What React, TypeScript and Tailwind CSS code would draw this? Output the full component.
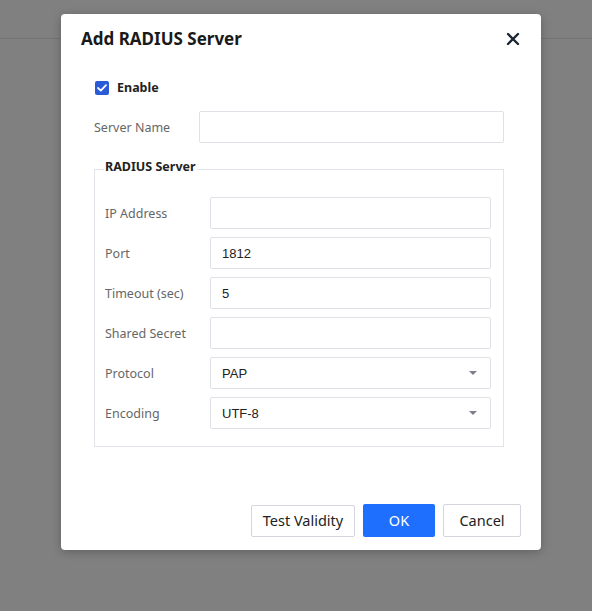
import React from 'react';

const FONT = "font-['Noto_Sans',_'Open_Sans',_sans-serif]";
const VALUE_FONT = "font-['Liberation_Sans',_Arial,_sans-serif]";

function CloseIcon() {
  return (
    <svg width="14" height="14" viewBox="0 0 14 14" fill="none" aria-hidden="true">
      <path d="M2 2 L12 12 M12 2 L2 12" stroke="#1c2733" strokeWidth="2.4" strokeLinecap="round" />
    </svg>
  );
}

function Caret() {
  return (
    <svg width="8" height="4" viewBox="0 0 8 4" aria-hidden="true">
      <path d="M0 0 L8 0 L4 4 Z" fill="#7a7f8a" />
    </svg>
  );
}

function Field({ value = '', select = false }: { value?: string; select?: boolean }) {
  return (
    <div
      className={`flex h-[32px] w-[281px] items-center justify-between rounded-[2px] border border-[#dfe1e6] bg-white pl-[11px] pr-[13px] text-[13px] text-[#222] ${VALUE_FONT}`}
    >
      <span className="pt-[2px]">{value}</span>
      {select && <Caret />}
    </div>
  );
}

const ROWS: Array<{ label: string; value?: string; select?: boolean }> = [
  { label: 'IP Address' },
  { label: 'Port', value: '1812' },
  { label: 'Timeout (sec)', value: '5' },
  { label: 'Shared Secret' },
  { label: 'Protocol', value: 'PAP', select: true },
  { label: 'Encoding', value: 'UTF-8', select: true },
];

export default function App() {
  return (
    <div className={`relative h-[611px] w-full overflow-hidden bg-[#808080] ${FONT}`}>
      {/* page behind the overlay */}
      <div className="h-[39px] border-b border-[#747474]" />

      {/* dialog */}
      <div className="absolute left-[61px] top-[14px] flex h-[536px] w-[480px] flex-col rounded-[4px] bg-white shadow-[0_2px_10px_rgba(0,0,0,0.25)]">
        <div className="flex h-[50px] items-center justify-between pl-[20px] pr-[21px]">
          <h2 className="text-[17px] font-bold text-[#1a1a1a]">Add RADIUS Server</h2>
          <CloseIcon />
        </div>

        <div className="flex flex-col pl-[33px] pr-[37px]">
          <label className="mt-[14px] flex h-[20px] items-center gap-[8px] pl-[1px]">
            <span className="flex h-[14px] w-[14px] items-center justify-center rounded-[2px] bg-[#2a5bd7]">
              <svg width="10" height="8" viewBox="0 0 10 8" aria-hidden="true">
                <path d="M1 4 L3.8 6.6 L9 1.2" stroke="#fff" strokeWidth="1.8" fill="none" strokeLinecap="round" strokeLinejoin="round" />
              </svg>
            </span>
            <span className="text-[12.5px] font-bold text-[#222]">Enable</span>
          </label>

          <div className="mt-[13px] flex h-[32px] items-center">
            <span className="w-[105px] pt-[2px] text-[12.5px] text-[#666]">Server Name</span>
            <div className="h-[32px] w-[305px] rounded-[2px] border border-[#dfe1e6]" />
          </div>

          <fieldset className="mt-[16px] w-[410px] border border-[#e3e4ea] pb-[17px] pl-[10px] pr-[12px] pt-[18px]">
            <legend className="-ml-[1px] px-[1px] text-[12.5px] font-bold leading-[20px] text-[#222]">
              <span className="relative -top-[2px]">RADIUS Server</span>
            </legend>
            <div className="flex flex-col gap-2">
              {ROWS.map((r) => (
                <div key={r.label} className="flex h-[32px] items-center">
                  <span className="w-[105px] pt-[3px] text-[12.5px] text-[#666]">{r.label}</span>
                  <Field value={r.value} select={r.select} />
                </div>
              ))}
            </div>
          </fieldset>
        </div>

        <div className="mt-auto flex items-center justify-end gap-2 pb-[13px] pr-[20px]">
          <button className="h-[32px] w-[104px] rounded-[2px] border border-[#d3d6dd] bg-white text-[14.5px] text-[#222]">
            Test Validity
          </button>
          <button className="h-[33px] w-[72px] rounded-[2px] bg-[#1f6fff] text-[14.5px] text-white">OK</button>
          <button className="h-[33px] w-[78px] rounded-[2px] border border-[#d3d6dd] bg-white text-[14.5px] text-[#222]">
            Cancel
          </button>
        </div>
      </div>
    </div>
  );
}
